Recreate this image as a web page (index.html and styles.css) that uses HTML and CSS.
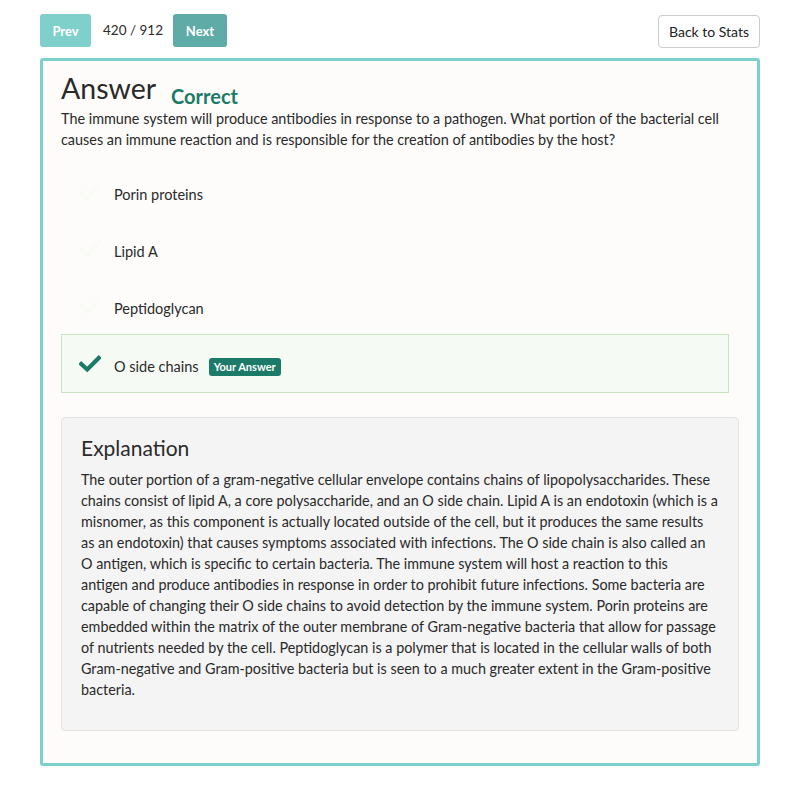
FILE: index.html
```html
<!DOCTYPE html>
<html>
<head>
<meta charset="utf-8">
<link rel="stylesheet" href="styles.css">
</head>
<body>
<div class="page">
  <div class="topbar">
    <div class="nav">
      <button class="btn btn-prev">Prev</button>
      <span class="count">420 / 912</span>
      <button class="btn btn-next">Next</button>
    </div>
    <button class="btn-back">Back to Stats</button>
  </div>
  <div class="card">
    <div class="title-row">
      <h1 class="title">Answer</h1>
      <span class="status">Correct</span>
    </div>
    <p class="question">The immune system will produce antibodies in response to a pathogen. What portion of the bacterial cell causes an immune reaction and is responsible for the creation of antibodies by the host?</p>
    <ul class="options">
      <li class="option">
        <svg class="check faint" viewBox="0 0 24 18"><path d="M2 9.5 L9 16 L22 2.5" fill="none" stroke="currentColor" stroke-width="4.5" stroke-linecap="square"/></svg>
        <span class="opt-text">Porin proteins</span>
      </li>
      <li class="option">
        <svg class="check faint" viewBox="0 0 24 18"><path d="M2 9.5 L9 16 L22 2.5" fill="none" stroke="currentColor" stroke-width="4.5" stroke-linecap="square"/></svg>
        <span class="opt-text">Lipid A</span>
      </li>
      <li class="option">
        <svg class="check faint" viewBox="0 0 24 18"><path d="M2 9.5 L9 16 L22 2.5" fill="none" stroke="currentColor" stroke-width="4.5" stroke-linecap="square"/></svg>
        <span class="opt-text">Peptidoglycan</span>
      </li>
      <li class="option selected">
        <svg class="check" viewBox="0 0 24 18"><path d="M2.5 9.5 L9 15.5 L21.5 3" fill="none" stroke="currentColor" stroke-width="4.5" stroke-linecap="square"/></svg>
        <span class="opt-text">O side chains</span>
        <span class="badge">Your Answer</span>
      </li>
    </ul>
    <div class="explanation">
      <h2 class="exp-title">Explanation</h2>
      <p class="exp-text">The outer portion of a gram-negative cellular envelope contains chains of lipopolysaccharides. These chains consist of lipid A, a core polysaccharide, and an O side chain. Lipid A is an endotoxin (which is a misnomer, as this component is actually located outside of the cell, but it produces the same results as an endotoxin) that causes symptoms associated with infections. The O side chain is also called an O antigen, which is specific to certain bacteria. The immune system will host a reaction to this antigen and produce antibodies in response in order to prohibit future infections. Some bacteria are capable of changing their O side chains to avoid detection by the immune system. Porin proteins are embedded within the matrix of the outer membrane of Gram-negative bacteria that allow for passage of nutrients needed by the cell. Peptidoglycan is a polymer that is located in the cellular walls of both Gram-negative and Gram-positive bacteria but is seen to a much greater extent in the Gram-positive bacteria.</p>
    </div>
  </div>
</div>
</body>
</html>
```

FILE: styles.css
```css
* { box-sizing: border-box; }
body {
  margin: 0;
  background: #ffffff;
  font-family: Lato, "Open Sans", sans-serif;
  color: #2b2b2b;
}
.page {
  width: 720px;
  margin-left: 40px;
  padding-top: 14px;
}
.topbar {
  display: flex;
  justify-content: space-between;
  align-items: flex-start;
  height: 44px;
}
.nav {
  display: flex;
  align-items: center;
}
.btn {
  height: 33px;
  border: none;
  border-radius: 3px;
  color: #ffffff;
  font-family: Lato, sans-serif;
  font-weight: 700;
  font-size: 13px;
  padding: 0;
}
.btn-prev {
  width: 51px;
  background: #7fcfcb;
}
.btn-next {
  width: 54px;
  background: #5eaba7;
}
.count {
  font-size: 13.5px;
  color: #2b2b2b;
  margin: 0 10px 0 12px;
  position: relative;
  top: -1px;
}
.btn-back {
  margin-top: 1px;
  width: 102px;
  height: 33px;
  background: #ffffff;
  border: 1px solid #cccccc;
  border-radius: 4px;
  font-family: Lato, sans-serif;
  font-size: 14px;
  color: #222;
  padding: 0;
}
.card {
  border: 3px solid #7ecfcb;
  border-radius: 3px;
  background: #fdfcfa;
  padding: 10px 18px 31px 18px;
  height: 708px;
}
.title-row {
  display: flex;
  align-items: baseline;
}
.title {
  margin: 0;
  font-size: 28.5px;
  font-weight: 400;
  color: #2a2a2a;
  line-height: 34px;
}
.status {
  margin-left: 15px;
  font-size: 20px;
  font-weight: 700;
  color: #1b7a68;
  position: relative;
  top: 5px;
}
.question {
  margin: 3px 0 0 0;
  font-size: 14.4px;
  line-height: 21px;
  color: #2a2a2a;
}
.options {
  list-style: none;
  margin: 13px 10px 0 0;
  padding: 0;
}
.option {
  display: flex;
  align-items: center;
  height: 57px;
  padding-left: 17px;
  font-size: 14.5px;
  color: #2a2a2a;
  border: 1px solid transparent;
}
.opt-text {
  position: relative;
  top: 3px;
}
.option.selected {
  height: 59px;
  background: #f6faf5;
  border-color: #c9e2c2;
}
.check {
  width: 22px;
  height: 17px;
  margin-right: 13px;
  color: #1b7a68;
}
.check.faint {
  color: #fafaf7;
}
.badge {
  margin-left: 10px;
  background: #1b7a68;
  color: #ffffff;
  font-size: 11px;
  font-weight: 700;
  border-radius: 3px;
  padding: 2px 5px 3px;
  line-height: 13px;
  position: relative;
  top: 3px;
}
.explanation {
  margin-top: 24px;
  background: #f4f4f4;
  border: 1px solid #e1e1e1;
  border-radius: 4px;
  padding: 17px 20px 30px 19px;
}
.exp-title {
  margin: 0;
  font-size: 21px;
  font-weight: 400;
  color: #2a2a2a;
  line-height: 26px;
}
.exp-text {
  margin: 8px 0 0 0;
  font-size: 14.36px;
  line-height: 21px;
  color: #2a2a2a;
}
```
